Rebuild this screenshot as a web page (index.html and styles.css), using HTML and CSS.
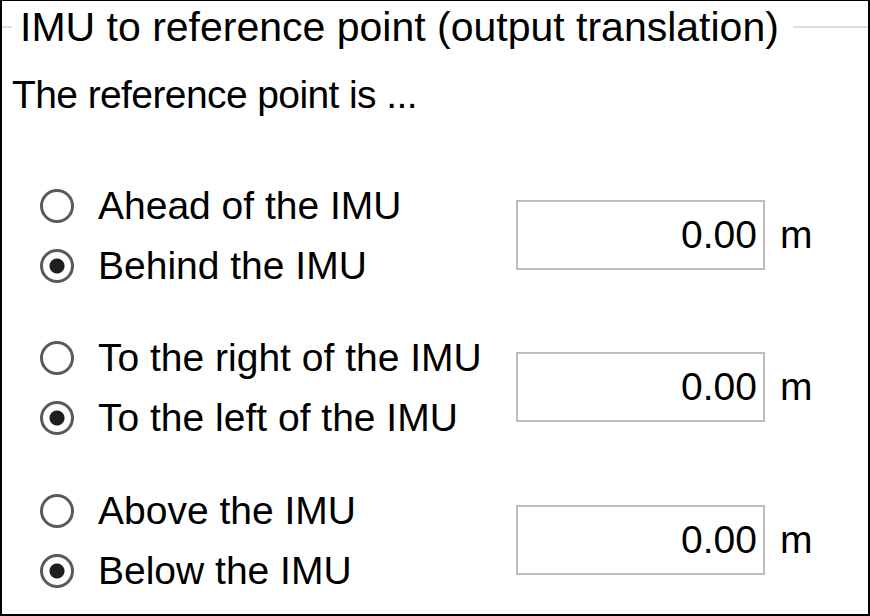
FILE: index.html
```html
<!DOCTYPE html>
<html lang="en">
<head>
  <meta charset="UTF-8" />
  <meta name="viewport" content="width=device-width, initial-scale=1.0" />
  <title>IMU to reference point</title>
  <link rel="stylesheet" href="styles.css">
</head>
<body>
  <div class="frame">
    <div class="group-title"><span>IMU to reference point (output translation)</span></div>
    <div class="intro">The reference point is ...</div>

    <div class="offsets">
      <!-- forward / backward -->
      <div class="offset-group">
        <div class="choices">
          <label class="choice"><input type="radio" name="x-dir"> Ahead of the IMU</label>
          <label class="choice"><input type="radio" name="x-dir" checked> Behind the IMU</label>
        </div>
        <div class="value">
          <input class="num" type="text" value="0.00">
          <span class="unit">m</span>
        </div>
      </div>

      <!-- right / left -->
      <div class="offset-group">
        <div class="choices">
          <label class="choice"><input type="radio" name="y-dir"> To the right of the IMU</label>
          <label class="choice"><input type="radio" name="y-dir" checked> To the left of the IMU</label>
        </div>
        <div class="value">
          <input class="num" type="text" value="0.00">
          <span class="unit">m</span>
        </div>
      </div>

      <!-- up / down -->
      <div class="offset-group">
        <div class="choices">
          <label class="choice"><input type="radio" name="z-dir"> Above the IMU</label>
          <label class="choice"><input type="radio" name="z-dir" checked> Below the IMU</label>
        </div>
        <div class="value">
          <input class="num" type="text" value="0.00">
          <span class="unit">m</span>
        </div>
      </div>
    </div>
  </div>
</body>
</html>
```

FILE: styles.css
```css
* {
  box-sizing: border-box;
}
body {
  margin: 0;
  padding: 0;
  background-color: white;
  font-family: "Liberation Sans", Arial, sans-serif;
  font-size: 39px;
  color: #000;
}
.frame {
  width: 870px;
  height: 616px;
  border: 2px solid #000;
  border-top-width: 1px;
  overflow: hidden;
}
.group-title {
  display: flex;
  align-items: center;
  margin-top: 3px;
  height: 46px;
  line-height: 46px;
  font-size: 41px;
}
.group-title::before,
.group-title::after {
  content: "";
  height: 2px;
  background-color: #d8e0e6;
}
.group-title::before {
  width: 10px;
}
.group-title::after {
  flex: 1;
}
.group-title span {
  padding: 0 14px 0 8px;
}
.intro {
  margin: 22px 0 0 10px;
  line-height: 46px;
  letter-spacing: -0.6px;
}
.offsets {
  display: flex;
  flex-direction: column;
  gap: 32px;
  margin-top: 58px;
}
.offset-group {
  display: flex;
  align-items: center;
}
.offset-group:last-child {
  margin-top: 1px;
}
.choices {
  display: flex;
  flex-direction: column;
  width: 514px;
}
.choice {
  display: flex;
  align-items: center;
  gap: 24px;
  height: 60px;
  padding-left: 38px;
}
.choice input {
  appearance: none;
  -webkit-appearance: none;
  margin: 0;
  width: 34px;
  height: 34px;
  border: 3px solid #5a5a5a;
  border-radius: 50%;
  background-color: white;
}
.choice input:checked {
  background: radial-gradient(circle, #1e1e1e 0 7px, white 8px);
}
.value {
  display: flex;
  align-items: center;
  gap: 15px;
  margin-top: -2px;
}
.num {
  width: 249px;
  height: 70px;
  border: 2px solid #bcbcbc;
  padding: 0 6px 0 0;
  text-align: right;
  font-family: inherit;
  font-size: 39px;
  color: #000;
  outline: none;
}
```
